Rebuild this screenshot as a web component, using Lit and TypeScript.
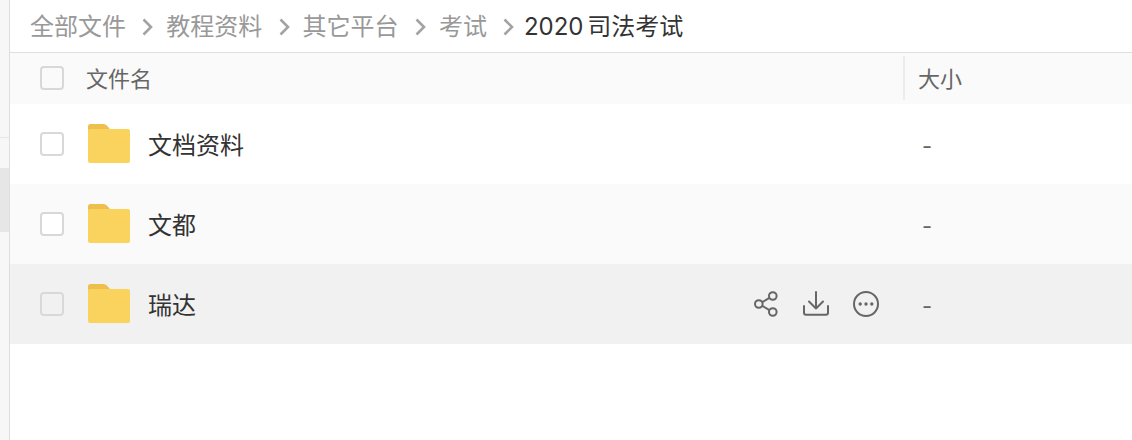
import { LitElement, html, css } from "lit";
import { customElement } from "lit/decorators.js";

const folder = html`<svg class="folder" viewBox="0 0 42 40" width="42" height="40">
  <path d="M0 2.5A2.5 2.5 0 0 1 2.500 0h12.500c2 0 3 .8 4 1.800l3 3.200v8H0z" fill="#eebf4c"/>
  <path d="M0 7a2 2 0 0 1 2-2h38a2 2 0 0 1 2 2v30a2 2 0 0 1-2 2H2a2 2 0 0 1-2-2z" fill="#f9d35e"/>
</svg>`;

const share = html`<svg viewBox="0 0 26 26" width="26" height="26" fill="none" stroke="#666" stroke-width="2">
  <circle cx="4.800" cy="13" r="3.800"/><circle cx="18.800" cy="5" r="3.800"/><circle cx="18.800" cy="21" r="3.800"/>
  <path d="M8.200 11.200l7.200-4.300M8.200 14.800l7.200 4.300"/></svg>`;
const download = html`<svg viewBox="0 0 28 28" width="28" height="28" fill="none" stroke="#666" stroke-width="2" stroke-linecap="round" stroke-linejoin="round">
  <path d="M14 2v16.500M7 11.500l7 7 7-7"/><path d="M2 16v6.700a2 2 0 0 0 2 2h20a2 2 0 0 0 2-2v-6.700"/></svg>`;
const more = html`<svg viewBox="0 0 28 28" width="28" height="28" fill="none" stroke="#666" stroke-width="2">
  <circle cx="14" cy="14" r="12"/>
  <g fill="#666" stroke="none"><circle cx="8.200" cy="14" r="1.700"/><circle cx="14" cy="14" r="1.700"/><circle cx="19.800" cy="14" r="1.700"/></g></svg>`;

@customElement("app-root")
export class AppRoot extends LitElement {
  static styles = css`
    :host { display: flex; width: 1132px; height: 440px; overflow: hidden; background: #fff;
      font-family: "Inter", "Noto Sans CJK SC", sans-serif; }
    .side { width: 9px; flex: none; background: #f7f7f7; border-right: 1px solid #dedede; display: flex; flex-direction: column; }
    .side .a { height: 137px; flex: none; border-bottom: 1px solid #e6e6e6; }
    .side .g { height: 30px; flex: none; }
    .side .s { height: 64px; flex: none; background: #e6e6e6; }
    .main { flex: 1; min-width: 0; display: flex; flex-direction: column; }
    .crumbs { height: 53px; flex: none; box-sizing: border-box; border-bottom: 1px solid #dfdfdf; padding: 0 0 3px 20px;
      display: flex; align-items: center; font-size: 24px; color: #999; }
    .crumbs span { white-space: nowrap; }
    .crumbs .cur { color: #333; word-spacing: -3px; }
    .crumbs svg { margin: 4px 13px 0 16.300px; flex: none; }
    .crumbs svg.last { margin: 4px 10px 0 16px; }
    .head { height: 51px; flex: none; box-sizing: border-box; padding-bottom: 1px; display: flex; align-items: center; background: #fafafa; font-size: 22px; color: #666; }
    .row { height: 80px; flex: none; display: flex; align-items: center; font-size: 24px; color: #333; }
    .row.alt { background: #fafafa; }
    .row.hover { background: #f1f1f1; }
    .check { width: 24px; height: 24px; box-sizing: border-box; border: 2px solid #d8d8d8; border-radius: 4px;
      background: #fff; margin-left: 30px; flex: none; }
    .row.hover .check, .head .check { background: transparent; }
    .namecol { flex: 1; min-width: 0; display: flex; align-items: center; }
    .head .label { margin-left: 22px; padding-bottom: 3px; }
    .folder { margin: 0 18px 0 24px; flex: none; }
    .row .name { flex: 1; padding-bottom: 2px; }
    .actions { display: flex; align-items: center; gap: 22px; margin-right: 24px; }
    .divider { width: 2px; height: 44px; background: #ececec; flex: none; }
    .sizehead { width: 227px; flex: none; padding: 0 0 3px 13px; box-sizing: border-box; }
    .size { width: 228px; flex: none; padding: 4px 0 0 18px; box-sizing: border-box; font-size: 22px; color: #666; }
  `;

  private chev(last = false) {
    return html`<svg class=${last ? "last" : ""} width="11" height="18" viewBox="0 0 11 18" fill="none" stroke="#a3a3a3" stroke-width="2.6"><path d="M1.500 1.500l7.500 7.500-7.500 7.500"/></svg>`;
  }

  private row(name: string, cls = "", actions = false) {
    return html`<div class="row ${cls}">
      <div class="check"></div>
      <div class="namecol">
        ${folder}
        <span class="name">${name}</span>
        ${actions ? html`<div class="actions">${share}${download}${more}</div>` : ""}
      </div>
      <div class="size">-</div>
    </div>`;
  }

  render() {
    return html`
      <div class="side"><div class="a"></div><div class="g"></div><div class="s"></div></div>
      <div class="main">
        <div class="crumbs">
          <span>全部文件</span>${this.chev()}<span>教程资料</span>${this.chev()}<span>其它平台</span>${this.chev()}<span>考试</span>${this.chev(true)}<span class="cur">2020 司法考试</span>
        </div>
        <div class="head">
          <div class="check"></div>
          <div class="namecol"><span class="label">文件名</span></div>
          <div class="divider"></div>
          <div class="sizehead">大小</div>
        </div>
        ${this.row("文档资料")}
        ${this.row("文都", "alt")}
        ${this.row("瑞达", "hover", true)}
      </div>
    `;
  }
}
